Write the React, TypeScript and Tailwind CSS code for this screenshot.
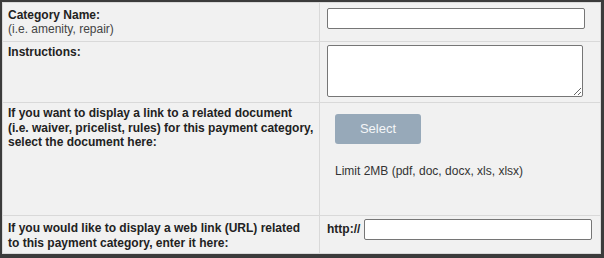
export default function App() {
  return (
    <div className="w-[604px] h-[258px] bg-[#3b3b3b] pt-[2px] pl-[2px] pr-[3px] pb-[4px] font-['Liberation_Sans',Arial,sans-serif] text-[12px] text-[#222]">
      <div className="grid grid-cols-[316px_280px] grid-rows-[38px_60px_112px_37px] gap-px bg-[#d9d9d9] p-px">
        {/* Category name */}
        <div className="bg-[#f1f1f1] px-[5px] pt-[5px] leading-[14px]">
          <div className="font-bold">Category Name:</div>
          <div className="text-[#444]">(i.e. amenity, repair)</div>
        </div>
        <div className="bg-[#f1f1f1] pl-[7px] pt-[5px]">
          <input
            type="text"
            className="block w-[258px] h-[21px] bg-white border border-[#767676] rounded-[2px] outline-none"
          />
        </div>

        {/* Instructions */}
        <div className="bg-[#f1f1f1] px-[5px] pt-[3px] leading-[14px]">
          <div className="font-bold">Instructions:</div>
        </div>
        <div className="bg-[#f1f1f1] pl-[7px] pt-[3px]">
          <textarea className="block w-[256px] h-[52px] bg-white border border-[#767676] rounded-[2px] outline-none resize" />
        </div>

        {/* Document */}
        <div className="bg-[#f1f1f1] px-[5px] pt-[3px] leading-[14.5px] font-bold">
          If you want to display a link to a related document (i.e. waiver, pricelist, rules) for this payment category, select the document here:
        </div>
        <div className="bg-[#f1f1f1] pl-[15px] pt-[11px]">
          <button className="w-[86px] h-[30px] rounded-[3px] bg-[#97a9b9] text-[13px] text-[#f4f6f8]">
            Select
          </button>
          <div className="mt-[20px] leading-[14px] text-[#333]">Limit 2MB (pdf, doc, docx, xls, xlsx)</div>
        </div>

        {/* Web link */}
        <div className="bg-[#f1f1f1] px-[5px] pt-[5px] leading-[14.5px] font-bold">
          If you would like to display a web link (URL) related to this payment category, enter it here:
        </div>
        <div className="bg-[#f1f1f1] pl-[7px] pt-[3px] flex items-start gap-[4px]">
          <span className="font-bold leading-[21px]">http://</span>
          <input
            type="text"
            className="block w-[228px] h-[21px] bg-white border border-[#767676] rounded-[2px] outline-none"
          />
        </div>
      </div>
    </div>
  )
}
